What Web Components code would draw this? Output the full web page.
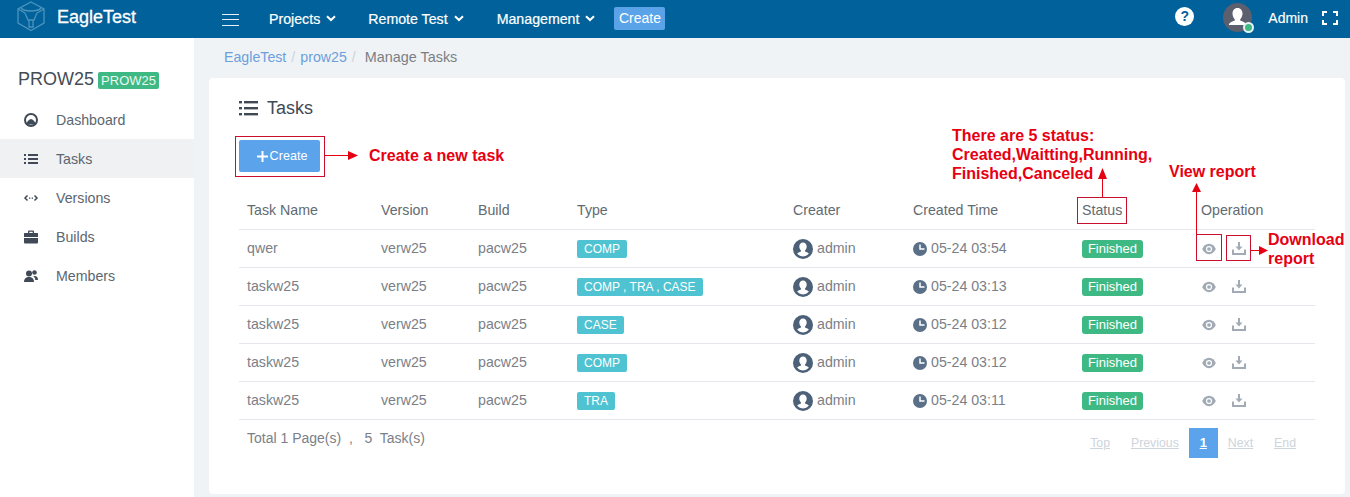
<!DOCTYPE html>
<html>
<head>
<meta charset="utf-8">
<title>EagleTest</title>
<style>
	html, body {
		margin: 0;
		height: 497px;
		overflow: hidden;
		font: 14px "Liberation Sans", Arial, sans-serif;
		color: #6c757d;
		background: #eff3f6;
	}
</style>
</head>
<body>
<app-shell>
	<top-bar slot="top"></top-bar>
	<side-bar slot="side" project="PROW25">
		<nav-item label="Dashboard" icon="dash"></nav-item>
		<nav-item label="Tasks" icon="list" active></nav-item>
		<nav-item label="Versions" icon="code"></nav-item>
		<nav-item label="Builds" icon="case"></nav-item>
		<nav-item label="Members" icon="people"></nav-item>
	</side-bar>
	<bread-crumb></bread-crumb>
	<tasks-card>
		<task-row head></task-row>
		<task-row name="qwer" types="COMP" time="05-24 03:54"></task-row>
		<task-row name="taskw25" types="COMP , TRA , CASE" time="05-24 03:13"></task-row>
		<task-row name="taskw25" types="CASE" time="05-24 03:12"></task-row>
		<task-row name="taskw25" types="COMP" time="05-24 03:12"></task-row>
		<task-row name="taskw25" types="TRA" time="05-24 03:11"></task-row>
		<page-bar></page-bar>
	</tasks-card>
	<note-layer></note-layer>
</app-shell>

<script>
const icons = {
	dash: `<svg width="16" height="16" viewBox="0 0 16 16"><circle cx="8" cy="8" r="6" fill="none" stroke="#3f4a56" stroke-width="2"/><path d="M3.5 12.5 A6.5 6.5 0 0 1 8 7 A6.5 6.5 0 0 1 12.5 12.5 Z" fill="#3f4a56"/></svg>`,
	list: `<svg width="16" height="16" viewBox="0 0 16 16" fill="#3f4a56"><rect x="1" y="3" width="2" height="2"/><rect x="1" y="7" width="2" height="2"/><rect x="1" y="11" width="2" height="2"/><rect x="5" y="3" width="10" height="2"/><rect x="5" y="7" width="10" height="2"/><rect x="5" y="11" width="10" height="2"/></svg>`,
	code: `<svg width="16" height="16" viewBox="0 0 16 16"><path d="M4.5 5.500 L2 8 L4.500 10.500 M11.500 5.500 L14 8 L11.500 10.500" fill="none" stroke="#3f4a56" stroke-width="1.500"/><rect x="6" y="7.500" width="1.300" height="1.300" fill="#3f4a56"/><rect x="8.700" y="7.500" width="1.300" height="1.300" fill="#3f4a56"/></svg>`,
	case: `<svg width="16" height="16" viewBox="0 0 16 16" fill="#3f4a56"><path d="M5 4V2.500A1 1 0 0 1 6 1.500h4a1 1 0 0 1 1 1V4h3.500a.8.800 0 0 1 .5.800V8H1V4.800A.8.800 0 0 1 1.500 4zM6.300 4h3.400V2.800H6.300z"/><path d="M1 9h14v4.500a1 1 0 0 1-1 1H2a1 1 0 0 1-1-1z"/></svg>`,
	people: `<svg width="16" height="16" viewBox="0 0 16 16" fill="#3f4a56"><circle cx="6" cy="5.500" r="3"/><path d="M1 14c0-3.500 2-5 5-5s5 1.500 5 5z"/><circle cx="11.500" cy="4.500" r="2.300"/><path d="M11.500 8c2.300 0 3.500 1.400 3.500 4h-2.700c-.2-1.600-.8-2.900-2-3.700.4-.2.800-.3 1.200-.3z"/></svg>`
};

class AppShell extends HTMLElement {
	constructor() {
		super();
		this.attachShadow({ mode: "open" }).innerHTML = `
		<style>
		:host { display: block; position: relative; width: 1350px; height: 497px; overflow: hidden; }
		.body { display: flex; height: 459px; }
		.main { flex: 1; min-width: 0; padding: 0 5px 0 15px; }
		</style>
		<slot name="top"></slot>
		<div class="body">
			<slot name="side"></slot>
			<div class="main"><slot></slot></div>
		</div>`;
	}
}

class TopBar extends HTMLElement {
	constructor() {
		super();
		const menu = (t, gap) => `<span class="menu" style="margin-right:${gap}px">${t}<svg width="10" height="7" viewBox="0 0 10 7"><path d="M1 1.200 L5 5 L9 1.200" fill="none" stroke="#fff" stroke-width="2"/></svg></span>`;
		this.attachShadow({ mode: "open" }).innerHTML = `
		<style>
		:host { display: flex; align-items: center; height: 38px; background: #01619a; color: #fff; font-size: 14.2px; }
		.logo { margin-left: 16px; width: 30px; height: 31px; display: block; margin-top: -6px; }
		.brand { margin-left: 11px; width: 86px; font-size: 18px; -webkit-text-stroke: .3px #fff; margin-top: -3px; }
		.burger { margin: 1px 30px 0 79px; width: 17px; height: 12px; display: flex; flex-direction: column; justify-content: space-between; }
		.burger i { display: block; height: 1px; background: #e6f0f6; }
		.menu { display: inline-flex; align-items: center; gap: 6px; -webkit-text-stroke: .2px #fff; margin-top: -1px; }
		.create { background: #5ba3e8; border-radius: 2px; height: 23px; line-height: 22px; font-size: 14px; width: 51px; text-align: center; margin-top: -2px; }
		.right { margin-left: auto; display: flex; align-items: center; }
		.help { width: 19px; height: 19px; border-radius: 50%; background: #fff; color: #01619a; font-weight: bold; font-size: 14px; line-height: 19px; text-align: center; margin: -5px 30px 0 0; }
		.avatar { position: relative; width: 29px; height: 29px; margin: -3px 15px 0 0; left: -1px; }
		.dot { position: absolute; right: -2px; bottom: -1px; width: 7px; height: 7px; border-radius: 50%; background: #3fb983; border: 2px solid #e8f2f6; }
		.admin { margin-right: 14px; margin-top: -3px; -webkit-text-stroke: .15px #fff; font-size: 14px; }
		.full { margin-right: 12px; margin-top: -3px; display: block; }
		</style>
		<svg class="logo" viewBox="0 0 30 31" fill="none" stroke="#4c93bd" stroke-width="1.300">
			<path d="M15 1 L28 8 V22 L15 29.500 L2 22 V8 Z"/>
			<path d="M2 8 L9 12 M28 8 L21 12 M5 7 C8 11 22 11 25 7"/>
			<path d="M9 12 L12 19 H18 L21 12 M13 19 V26 H17 V19"/>
		</svg>
		<span class="brand">EagleTest</span>
		<span class="burger"><i></i><i></i><i></i></span>
		${menu("Projects", 32)}${menu("Remote Test", 33)}${menu("Management", 19)}
		<span class="create">Create</span>
		<span class="right">
			<span class="help">?</span>
			<span class="avatar">
				<svg width="29" height="29" viewBox="0 0 29 29"><circle cx="14.500" cy="14.500" r="14.500" fill="#5b5f6e"/><path d="M14.500 5c3.300 0 5 2.500 5 5.500 0 2.500-1 4.500-2.300 5.700v1.300c2.500 1 5 1.800 5.800 3.500v1H6v-1c.8-1.700 3.300-2.500 5.800-3.500v-1.300C10.500 15 9.500 13 9.500 10.500 9.500 7.500 11.200 5 14.500 5z" fill="#fff"/></svg>
				<span class="dot"></span>
			</span>
			<span class="admin">Admin</span>
			<svg class="full" width="16" height="14" viewBox="0 0 16 14" fill="none" stroke="#fff" stroke-width="2"><path d="M1 5V1H5M11 1H15V5M15 9V13H11M5 13H1V9"/></svg>
		</span>`;
	}
}

class SideBar extends HTMLElement {
	constructor() {
		super();
		this.attachShadow({ mode: "open" }).innerHTML = `
		<style>
		:host { display: block; flex: none; width: 194px; background: #fff; padding-top: 30px; box-sizing: border-box; }
		.head { display: flex; align-items: center; height: 22px; padding-left: 18px; margin-bottom: 10px; font-size: 18px; color: #444c54; }
		.badge { margin-left: 4px; width: 61px; height: 17px; line-height: 17px; text-align: center; background: #3fb983; color: #e9f8f1; font-size: 13px; border-radius: 2px; margin-top: 2px; }
		</style>
		<div class="head"><span class="name"></span><span class="badge"></span></div>
		<slot></slot>`;
	}
	connectedCallback() {
		const p = this.getAttribute("project");
		this.shadowRoot.querySelector(".name").textContent = p;
		this.shadowRoot.querySelector(".badge").textContent = p;
	}
}

class NavItem extends HTMLElement {
	constructor() {
		super();
		this.attachShadow({ mode: "open" });
	}
	connectedCallback() {
		this.shadowRoot.innerHTML = `
		<style>
		:host { display: flex; align-items: center; height: 39px; padding-left: 23px; color: #5c6670; font-size: 14.2px; }
		:host([active]) { background: #eff1f2; }
		.ic { width: 16px; height: 16px; margin-right: 17px; }
		</style>
		<span class="ic">${icons[this.getAttribute("icon")]}</span><span>${this.getAttribute("label")}</span>`;
	}
}

class BreadCrumb extends HTMLElement {
	constructor() {
		super();
		this.attachShadow({ mode: "open" }).innerHTML = `
		<style>
		:host { display: flex; align-items: center; height: 38px; margin-bottom: 2px; padding-left: 15px; font-size: 14.2px; color: #7b7f85; }
		a { color: #6c9fdc; text-decoration: none; }
		i { font-style: normal; color: #ccd3d9; margin: 0 5px; }
		b { font-weight: normal; margin-left: 4px; font-size: 14.4px; }
		</style>
		<a>EagleTest</a><i>/</i><a>prow25</a><i>/</i><b>Manage Tasks</b>`;
	}
}

class TasksCard extends HTMLElement {
	constructor() {
		super();
		this.attachShadow({ mode: "open" }).innerHTML = `
		<style>
		:host { display: block; height: 416px; box-sizing: border-box; padding: 19px 30px 0; background: #fff; border-radius: 4px; }
		.title { display: flex; align-items: center; gap: 8px; height: 22px; font-size: 18px; color: #3f4a56; }
		.title svg { width: 20px; height: 20px; }
		button { display: flex; align-items: center; justify-content: center; gap: 2px; margin: 21px 0 19px; width: 81px; height: 32px; padding: 0 0 0 5px; border: 0; border-radius: 2px; background: #5ba3ea; color: #fff; font: 12.6px "Liberation Sans", Arial, sans-serif; }
		</style>
		<div class="title"><svg viewBox="0 0 20 20" fill="#3f4a56"><rect x="0" y="3" width="3" height="2.400"/><rect x="0" y="9" width="3" height="2.400"/><rect x="0" y="15" width="3" height="2.400"/><rect x="5" y="3" width="14" height="2.400"/><rect x="5" y="9" width="14" height="2.400"/><rect x="5" y="15" width="14" height="2.400"/></svg><span>Tasks</span></div>
		<button><svg width="11" height="11" viewBox="0 0 11 11"><path d="M5.500 0v11M0 5.500h11" stroke="#fff" stroke-width="2"/></svg><span>Create</span></button>
		<slot></slot>`;
	}
}

class TaskRow extends HTMLElement {
	constructor() {
		super();
		this.attachShadow({ mode: "open" });
	}
	connectedCallback() {
		const style = `<style>
		:host { display: grid; grid-template-columns: 134px 97px 99px 216px 120px 169px 119px 1fr; height: 38px; align-items: center; border-top: 1px solid #e4e8ec; box-sizing: border-box; font-size: 14.2px; color: #7b8087; }
		:host([head]) { border-top: 0; color: #626a72; }
		:host(:last-of-type) { border-bottom: 1px solid #e4e8ec; height: 39px; }
		.c { padding-left: 8px; display: flex; align-items: center; white-space: nowrap; }
		.txt, .when span, .who span { padding-bottom: 2px; }
		:host([head]) .txt { padding-bottom: 0; }
		.tag { display: inline-block; height: 18px; line-height: 18px; padding: 0 7px; border-radius: 2px; background: #4fc3d1; color: #fff; font-size: 12px; }
		.ok { display: inline-block; width: 61px; height: 18px; line-height: 18px; text-align: center; border-radius: 3px; background: #3fb983; color: #fff; font-size: 13px; }
		.who svg { margin-right: 4px; }
		.when svg { margin-right: 4px; }
		.ops svg { display: block; }
		.ops { padding-left: 9px; }
		.ops svg:first-child { margin-right: 16px; }
		</style>`;
		if (this.hasAttribute("head")) {
			this.shadowRoot.innerHTML = style + ["Task Name", "Version", "Build", "Type", "Creater", "Created Time", "Status", "Operation"].map(t => `<div class="c txt">${t}</div>`).join("");
			return;
		}
		const a = n => this.getAttribute(n);
		this.shadowRoot.innerHTML = style + `
		<div class="c txt">${a("name")}</div>
		<div class="c txt">verw25</div>
		<div class="c txt">pacw25</div>
		<div class="c"><span class="tag">${a("types")}</span></div>
		<div class="c who"><svg width="20" height="20" viewBox="0 0 20 20"><circle cx="10" cy="10" r="10" fill="#4c6078"/><path d="M10 3.500c2.300 0 3.700 1.800 3.700 4 0 1.800-.8 3.200-1.700 4v1c1.800.6 3.200 1.200 3.800 2.300A8 8 0 0 1 10 17.500a8 8 0 0 1-5.800-2.700c.6-1.100 2-1.700 3.800-2.300v-1c-.9-.8-1.700-2.200-1.700-4 0-2.200 1.400-4 3.700-4z" fill="#fff"/></svg><span>admin</span></div>
		<div class="c when"><svg width="14" height="14" viewBox="0 0 14 14"><circle cx="7" cy="7" r="7" fill="#5a7088"/><path d="M7 2.500V7h4.500" fill="none" stroke="#fff" stroke-width="1.500"/></svg><span>${a("time")}</span></div>
		<div class="c"><span class="ok">Finished</span></div>
		<div class="c ops">
			<svg width="14" height="12" viewBox="0 0 15 12"><path d="M7.500 .5C4 .5 1.500 3 .2 6c1.300 3 3.800 5.500 7.300 5.500S13.500 9 14.800 6C13.500 3 11 .5 7.500 .5z" fill="#a2abb5"/><circle cx="7.500" cy="6" r="3.300" fill="#fff"/><circle cx="7.500" cy="6" r="2" fill="#a2abb5"/></svg>
			<svg width="14" height="13" viewBox="0 0 14 13"><path d="M6 0h2v4.500h2.500L7 8.500 3.500 4.500H6z" fill="#a2abb5"/><path d="M1 7.500V12H13V7.500" fill="none" stroke="#a2abb5" stroke-width="2"/></svg>
		</div>`;
	}
}

class PageBar extends HTMLElement {
	constructor() {
		super();
		this.attachShadow({ mode: "open" }).innerHTML = `
		<style>
		:host { display: flex; justify-content: space-between; font-size: 14px; color: #7b8087; padding: 8px 19px 0 8px; }
		.total { white-space: pre; line-height: 20px; }
		.pages { display: flex; align-items: center; height: 30px; font-size: 12.3px; }
		a { color: #cdd4db; text-decoration: underline; }
		.cur { width: 29px; height: 30px; line-height: 30px; text-align: center; background: #5ba3ea; color: #fff; font-weight: bold; font-size: 13px; margin: 0 10px; }
		.sp { width: 21px; }
		</style>
		<span class="total">Total 1 Page(s)  ,   5  Task(s)</span>
		<span class="pages"><a>Top</a><span class="sp"></span><a>Previous</a><a class="cur">1</a><a>Next</a><span class="sp"></span><a>End</a></span>`;
	}
}

// red help notes drawn over the screenshot
class NoteLayer extends HTMLElement {
	constructor() {
		super();
		const label = (x, y, t) => `<span class="t" style="left:${x}px;top:${y}px">${t}</span>`;
		this.attachShadow({ mode: "open" }).innerHTML = `
		<style>
		:host { position: absolute; inset: 0; pointer-events: none; }
		svg { position: absolute; left: 0; top: 0; }
		.t { position: absolute; color: #e60012; font: bold 16px/19px "Liberation Sans", Arial, sans-serif; white-space: nowrap; }
		</style>
		<svg width="1350" height="497" fill="none" stroke="#c8102e" stroke-width="1">
			<rect x="235.500" y="136.500" width="89" height="40"/>
			<rect x="1077.500" y="197.500" width="49" height="26"/>
			<rect x="1196.500" y="234.500" width="25" height="26"/>
			<rect x="1226.500" y="235.500" width="24" height="25"/>
			<g stroke="#e60012">
				<path d="M325 155.500H350"/><path d="M1102.500 197V178"/><path d="M1196.500 234V192"/><path d="M1251 250.500H1260"/>
			</g>
			<g fill="#e60012" stroke="none">
				<path d="M348 151L358 155.500L348 160Z"/>
				<path d="M1102.500 168L1107 179H1098Z"/>
				<path d="M1196.500 183L1201 192H1192Z"/>
				<path d="M1259 246L1268 250.500L1259 255Z"/>
			</g>
		</svg>
		${label(369, 146, "Create a new task")}
		${label(952, 126, "There are 5 status:")}
		${label(952, 145, "Created,Waitting,Running,")}
		${label(952, 164, "Finished,Canceled")}
		${label(1169, 162, "View report")}
		${label(1268, 230, "Download")}
		${label(1268, 249, "report")}`;
	}
}

customElements.define("app-shell", AppShell);
customElements.define("top-bar", TopBar);
customElements.define("side-bar", SideBar);
customElements.define("nav-item", NavItem);
customElements.define("bread-crumb", BreadCrumb);
customElements.define("tasks-card", TasksCard);
customElements.define("task-row", TaskRow);
customElements.define("page-bar", PageBar);
customElements.define("note-layer", NoteLayer);
</script>
</body>
</html>
